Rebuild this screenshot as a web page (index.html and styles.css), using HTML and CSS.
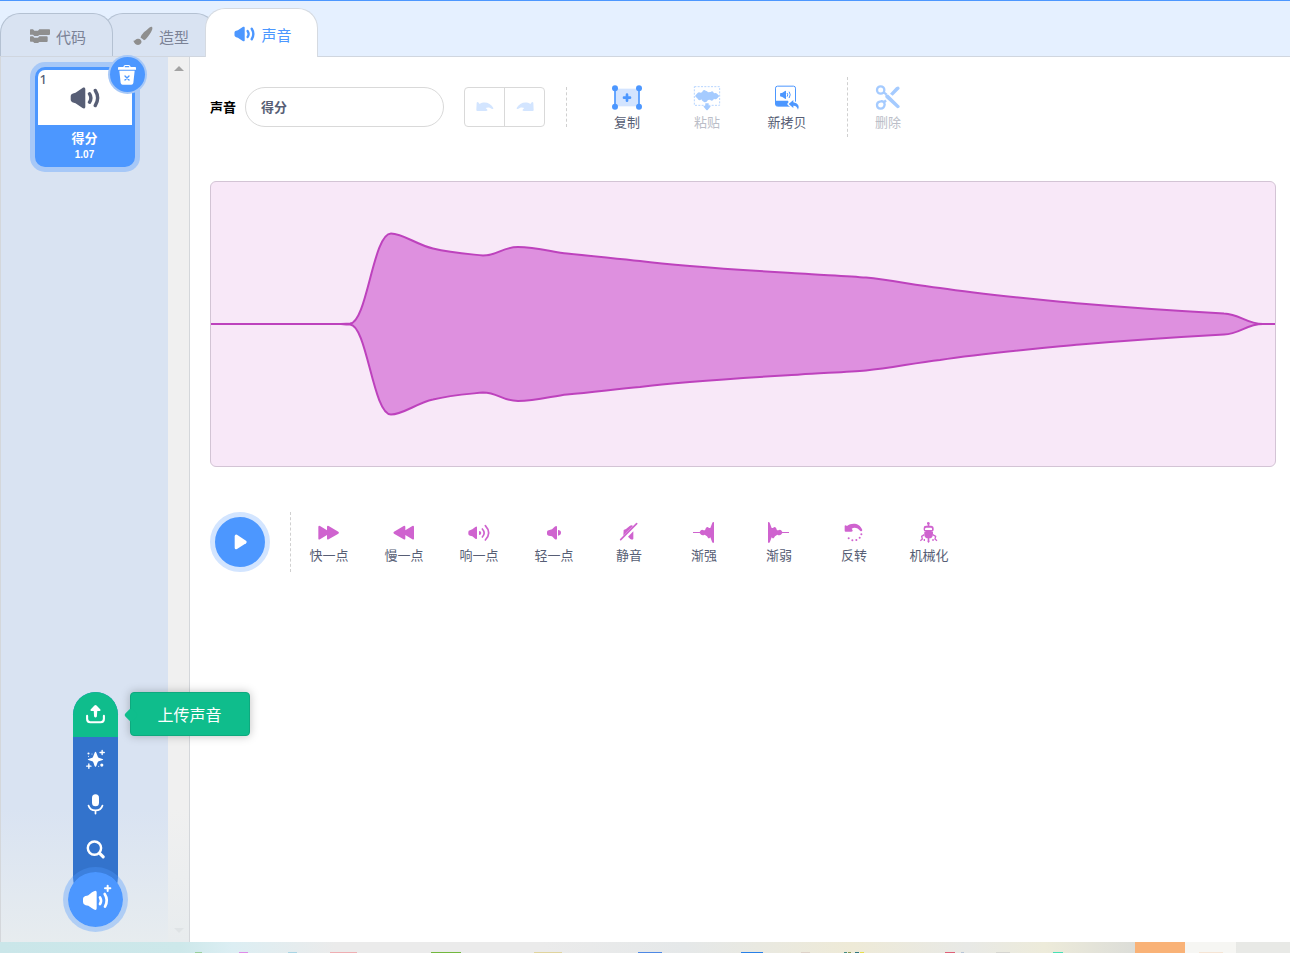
FILE: index.html
```html
<!DOCTYPE html>
<html lang="zh-CN">
<head>
<meta charset="utf-8">
<title>声音</title>
<link rel="stylesheet" href="styles.css">
</head>
<body>
<svg class="defs" aria-hidden="true">
  <symbol id="speaker" viewBox="0 0 30 22">
    <path d="M3 6.500 L5.500 5.800 L12.500 .9 C14 0 15.300 .7 15.300 2 V20 C15.300 21.300 14 22 12.500 21.100 L5.500 16.200 L3 15.500 C1.500 15 .7 14 .7 12.600 V9.400 C.7 8 1.500 7 3 6.500Z" fill="currentColor"/>
    <path d="M19.500 6.800 Q22.300 11 19.500 15.200 M25.300 3.500 Q30 11 25.300 18.500" fill="none" stroke="currentColor" stroke-width="3.400" stroke-linecap="round"/>
  </symbol>
</svg>
<div class="app">
  <header class="tabs" role="tablist">
    <button class="tab tab-first" role="tab">
      <svg width="20" height="14" viewBox="0 0 60 42"><path d="M0 3 Q0 1 2 1 H9 L13 5 H24 L28 1 H58 Q60 1 60 3 V15 Q60 18 57 18 H28 L24 21 H13 L9 17 H0Z M0 24 Q0 22 2 22 H9 L13 26 H24 L28 22 H50 Q53 22 53 25 V36 Q53 39 50 39 H28 L24 42 H13 L9 38 H2 Q0 38 0 36Z" fill="#8f8f8f"/></svg>
      <span>代码</span>
    </button>
    <button class="tab tab-second" role="tab">
      <svg width="20" height="20" viewBox="0 0 60 60"><path d="M57 3 C60 7 57 14 50 25 C44 34 39 41 33 43 C30 40 27 37 23 36 C23 27 33 18 42 11 C49 5 54 1 57 3Z M1 44 C6 46 8 37 16 38 C24 39 28 46 24 52 C18 61 5 57 1 44Z" fill="#8f8f8f"/></svg>
      <span>造型</span>
    </button>
    <button class="tab tab-active" role="tab" aria-selected="true">
      <svg width="21" height="16"><use href="#speaker"/></svg>
      <span>声音</span>
    </button>
  </header>

  <main class="workspace">
    <aside class="sidebar">
      <div class="sound-list">
        <div class="sound-item">
          <div class="sound-thumb">
            <span class="sound-number">1</span>
            <svg width="30" height="22"><use href="#speaker"/></svg>
          </div>
          <span class="sound-name">得分</span>
          <span class="sound-length">1.07</span>
          <button class="sound-delete" aria-label="删除声音">
            <svg width="18" height="20" viewBox="0 0 54 60"><path d="M2 6 H16 Q17 0 22 0 H32 Q37 0 38 6 H52 Q54 6 54 10 V14 H0 V10 Q0 6 2 6Z M4 17 H50 L46 54 Q45 59 40 59 H14 Q9 59 8 54Z" fill="#fff"/><path d="M22 5 H32 M21 33 L33 45 M33 33 L21 45" stroke="#4c97ff" stroke-width="4" stroke-linecap="round"/></svg>
          </button>
        </div>
      </div>
      <div class="scrollbar" aria-hidden="true"><i class="arrow-up"></i><i class="arrow-down"></i></div>

      <div class="add-menu">
        <div class="add-options">
          <button class="add-option add-upload" aria-label="上传声音">
            <svg width="21" height="21" viewBox="0 0 60 60"><path d="M6 34 V43 Q6 52 15 52 H45 Q54 52 54 43 V34" fill="none" stroke="#fff" stroke-width="6" stroke-linecap="round"/><path d="M27 4 Q30 1 33 4 L44 16 Q46 20 42 20 H35 L34 36 Q30 41 26 36 L25 20 H18 Q14 20 16 16Z" fill="#fff"/></svg>
          </button>
          <button class="add-option" aria-label="随机">
            <svg width="21" height="21" viewBox="0 0 60 60" fill="#fff"><path d="M30 8 C33 8 35 21 38 24 C40 27 52 27 52 30 C52 33 41 33 38 36 C35 38 33 51 30 51 C27 51 25 38 22 36 C19 33 8 33 8 30 C8 27 20 27 22 24 C25 21 27 8 30 8Z"/><path d="M49 4 V16 M43 10 H55 M11 43 V55 M5 49 H17" stroke="#fff" stroke-width="4" stroke-linecap="round"/><circle cx="10" cy="13" r="3"/><circle cx="10" cy="21" r="1.500"/><circle cx="20" cy="14" r="1.500"/><circle cx="48" cy="46" r="4.500"/><circle cx="39" cy="49" r="1.500"/></svg>
          </button>
          <button class="add-option" aria-label="录制">
            <svg width="21" height="21" viewBox="0 0 60 60"><rect x="20" y="1" width="20" height="34" rx="10" fill="#fff"/><path d="M10 33 Q14 47 30 47 Q46 47 50 33 M30 47 V56" fill="none" stroke="#fff" stroke-width="5" stroke-linecap="round"/></svg>
          </button>
          <button class="add-option" aria-label="选择一个声音">
            <svg width="21" height="21" viewBox="0 0 60 60" fill="none" stroke="#fff" stroke-linecap="round"><circle cx="27" cy="26" r="19" stroke-width="7"/><path d="M42 41 L52 51" stroke-width="9"/></svg>
          </button>
          <span class="tooltip" role="tooltip">上传声音</span>
        </div>
        <button class="add-main" aria-label="添加声音">
          <svg width="32" height="30" viewBox="0 0 96 90"><path d="M18 38 L22 37 L33 28 Q47 18 47 28 V76 Q47 86 33 76 L22 68 L14 67 Q6 65 6 57 V47 Q7 39 18 38Z" fill="#fff"/><path d="M57 43 Q63 53 57 63 M71 33 Q83 51 72 71" fill="none" stroke="#fff" stroke-width="8" stroke-linecap="round"/><path d="M80 8 V24 M72 16 H88" stroke="#fff" stroke-width="6" stroke-linecap="round"/></svg>
        </button>
      </div>
    </aside>

    <section class="editor">
      <div class="toolbar">
        <label class="name-label" for="sound-name">声音</label>
        <input class="name-input" id="sound-name" type="text" value="得分">
        <div class="history">
          <button class="history-button" aria-label="撤销"><svg width="18" height="12" viewBox="0 0 54 36"><path d="M2 5 Q5 0 9 7 L11 9 C24 0 44 5 52 21 Q53 25 48 24 C43 19 35 18 29 21 L33 25 Q37 30 30 30 H4 Q1 30 1 27Z" fill="#d3e5ff"/></svg></button>
          <button class="history-button" aria-label="重做"><svg width="18" height="12" viewBox="0 0 54 36"><path d="M52 5 Q49 0 45 7 L43 9 C30 0 10 5 2 21 Q1 25 6 24 C11 19 19 18 25 21 L21 25 Q17 30 24 30 H50 Q53 30 53 27Z" fill="#d3e5ff"/></svg></button>
        </div>
        <div class="divider divider-short"></div>
        <div class="tool-group">
          <button class="tool">
            <svg width="32" height="28" viewBox="63 40 96 84"><path d="M75 54 H147 V107 H75Z" fill="#d3e4ff"/><path d="M75 54 V107 M147 54 V107" stroke="#4c97ff" stroke-width="5"/><g fill="#4c97ff"><circle cx="75" cy="53" r="9"/><circle cx="147" cy="53" r="9"/><circle cx="75" cy="108" r="9"/><circle cx="147" cy="108" r="9"/></g><path d="M111 72 V90 M102 81 H120" stroke="#4c97ff" stroke-width="8" stroke-linecap="round"/></svg>
            <span>复制</span>
          </button>
          <button class="tool" disabled>
            <svg width="32" height="28" viewBox="303 40 96 84"><rect x="313" y="48" width="76" height="56" fill="none" stroke="#b7d5ff" stroke-width="3" stroke-dasharray="6 4"/><path d="M315 76 L322 68 Q326 63 331 66 L336 65 Q340 55 347 60 Q352 61 354 65 L362 64 Q368 58 372 68 Q378 65 382 70 L388 76 L382 83 Q377 88 372 84 Q367 94 360 87 L354 88 Q348 98 341 93 Q336 92 334 86 Q328 92 323 84Z M346 98 H356 V105 H360 Q364 106 360 110 L353 118 Q351 120 349 118 L342 110 Q338 106 343 105 H346Z" fill="#a5cbff"/></svg>
            <span>粘贴</span>
          </button>
          <button class="tool">
            <svg width="32" height="28" viewBox="543 40 96 84"><rect x="556.500" y="46.500" width="60" height="60" rx="6" fill="#fff" stroke="#4c97ff" stroke-width="3"/><path d="M556 90 H594 L600 106 H563 Q556 106 556 99Z" fill="#4c97ff"/><path d="M571 67 H576 L585 61 Q588 59 588 62 V83 Q588 86 585 84 L576 78 H573 Q570 78 570 74Z" fill="#4c97ff"/><path d="M592 68 Q595 72 592 77 M598 64 Q604 72 598 81" fill="none" stroke="#4c97ff" stroke-width="3" stroke-linecap="round"/><path d="M610 88 L596 100 L610 112 V105 Q620 104 624 117 Q632 100 610 95Z" fill="#4c97ff" stroke="#fff" stroke-width="8" paint-order="stroke" stroke-linejoin="round"/></svg>
            <span>新拷贝</span>
          </button>
        </div>
        <div class="divider"></div>
        <button class="tool" disabled>
          <svg width="32" height="28" viewBox="846 40 96 84"><g fill="none" stroke="#a5cbff"><circle cx="872" cy="58" r="11" stroke-width="7"/><path d="M872 92 Q883 90 884 102 Q882 114 872 114 Q861 113 861 102 Q862 93 872 92Z" stroke-width="7"/><path d="M881 65 L890 72 M881 96 L888 89" stroke-width="7"/></g><path d="M887 73 Q893 69 898 75 L929 106 Q930 112 922 113 L887 81 Q884 77 887 73Z M900 69 L918 50 Q928 44 929 54 L908 75Z" fill="#a5cbff"/></svg>
          <span>删除</span>
        </button>
      </div>

      <div class="waveform">
        <svg viewBox="0 0 1064 284" preserveAspectRatio="none">
          <path d="M-2 142 H130 Q136 141.500 139 141.500 C156 141 162 51.500 180 51.500 C192 51.500 206 63 222 66.500 C240 71 258 72 272 73.500 C287 73.500 291 65 307 65 C325 65 342 70 356 71.500 C383 74 407 77 429 79 C475 85 530 88 589 91.500 C612 93 638 94 655 95.500 C680 98 703 103 729 106 C775 113 822 117 869 121.500 C910 125 950 128 1013 131.500 C1029 132 1035 142 1052 142 H1066 H1052 C1035 142 1029 152 1013 152.500 C950 156 910 159 869 162.500 C822 167 775 171 729 178 C703 181 680 186 655 188.500 C638 190 612 191 589 192.500 C530 196 475 199 429 205 C407 207 383 210 356 212.500 C342 214 325 219 307 219 C291 219 287 210.500 272 210.500 C258 212 240 213 222 217.500 C206 221 192 232.500 180 232.500 C162 232.500 156 143 139 142.500 Q136 142.500 130 142 H-2Z"/>
        </svg>
      </div>

      <div class="effects">
        <button class="play" aria-label="播放"><svg width="16" height="16" viewBox="0 0 48 48"><path d="M8 6 Q9 0 15 2 L42 20 Q47 24 42 28 L15 45 Q9 48 8 42Z" fill="#fff"/></svg></button>
        <div class="divider"></div>
        <button class="effect"><svg width="32" height="24" viewBox="338 63 96 72"><path d="M354 80 Q355 76 359 78 L380 91 V80 Q381 76 385 78 L414 95 Q418 98 414 101 L385 118 Q381 120 380 116 V105 L359 118 Q355 120 354 116Z"/></svg><span>快一点</span></button>
        <button class="effect"><svg width="32" height="24" viewBox="564 63 96 72"><path d="M642 80 Q641 76 637 78 L616 91 V80 Q615 76 611 78 L582 95 Q578 98 582 101 L611 118 Q615 120 616 116 V105 L637 118 Q641 120 642 116Z"/></svg><span>慢一点</span></button>
        <button class="effect"><svg width="32" height="24" viewBox="789 63 96 72"><path d="M805 96 Q805 92 810 91 L817 88 L826 81 Q831 78 831 82 V115 Q831 119 826 116 L817 109 L810 107 Q805 106 805 102Z M837 93 Q844 93 844 99 Q844 105 837 105Z"/><path d="M847 87 Q858 99 847 111 M856 77 Q876 99 856 120" fill="none" stroke="#cf63cf" stroke-width="5" stroke-linecap="round"/></svg><span>响一点</span></button>
        <button class="effect"><svg width="32" height="24" viewBox="1014 63 96 72"><path d="M1041 96 Q1041 92 1046 91 L1056 88 L1064 80 Q1071 75 1071 82 V115 Q1071 121 1064 117 L1056 109 L1046 107 Q1041 106 1041 102Z M1074 90 Q1083 91 1083 98 Q1083 105 1074 107Z"/></svg><span>轻一点</span></button>
        <button class="effect"><svg width="32" height="24" viewBox="69 63 96 72"><path d="M101 90 L108 87 L119 78 Q125 74 129 78 L100 107Z M130 94 V116 Q128 121 121 117 L114 110Z"/><path d="M92 119 L140 71" stroke="#cf63cf" stroke-width="5" stroke-linecap="round"/></svg><span>静音</span></button>
        <button class="effect"><svg width="32" height="24" viewBox="294 63 96 72"><path d="M309 96 H329 Q334 86 341 91 L345 91 Q349 76 357 84 L361 84 L367 68 Q369 65 372 67 V128 Q368 130 366 125 L361 112 Q356 120 351 109 L344 104 Q335 110 329 99 H309Z"/></svg><span>渐强</span></button>
        <button class="effect"><svg width="32" height="24" viewBox="519 63 96 72"><path d="M597 96 H577 Q572 86 565 91 L561 91 Q557 76 549 84 L545 84 L539 68 Q537 65 534 67 V128 Q538 130 540 125 L545 112 Q550 120 555 109 L562 104 Q571 110 577 99 H597Z"/></svg><span>渐弱</span></button>
        <button class="effect"><svg width="32" height="24" viewBox="744 63 96 72"><path d="M764 77 Q766 74 771 78 C785 67 809 68 817 90 Q816 95 811 93 C804 83 792 80 785 86 L788 91 Q789 95 784 95 H767 Q764 95 764 92Z"/><path d="M814 103 h.1 M809 113 h.1 M799 120 h.1 M787 121 h.1 M776 115 h.1" fill="none" stroke="#cf63cf" stroke-width="6" stroke-linecap="round"/></svg><span>反转</span></button>
        <button class="effect"><svg width="32" height="24" viewBox="969 63 96 72"><circle cx="1015" cy="70" r="4"/><path fill-rule="evenodd" d="M1013 71 H1018 V77 H1024 Q1031 78 1031 84 V90 Q1030 96 1023 96 H1008 Q1001 95 1001 89 V84 Q1001 77 1008 77 H1013Z M1008 83 Q1004 84 1005 90 H1026 Q1027 84 1024 83Z M1003 96 H1029 Q1030 112 1022 115 H1018 V121 Q1021 125 1016 129 Q1010 126 1013 121 V115 H1010 Q1001 112 1003 96Z"/><path d="M1003 104 L995 109 L997 117 L991 122 M1003 117 V123 M1028 104 L1037 109 L1035 117 L1041 122 M1029 117 V123" fill="none" stroke="#cf63cf" stroke-width="4"/></svg><span>机械化</span></button>
      </div>
    </section>
  </main>

  <footer class="desktop-strip" aria-hidden="true">
    <svg viewBox="0 0 1290 11" preserveAspectRatio="none">
      <rect x="1135" width="50" height="11" fill="#f9b277"/><rect x="1185" width="51" height="11" fill="#f6f6f3"/>
      <g>
        <rect x="195" y="10" width="7" height="1" fill="#99cf9c"/><rect x="239" y="10" width="9" height="1" fill="#df8ae8"/><rect x="288" y="10" width="9" height="1" fill="#a9d5e4"/><rect x="330" y="10" width="27" height="1" fill="#efaeb2"/><rect x="431" y="10" width="30" height="1" fill="#72b83e"/><rect x="534" y="10" width="28" height="1" fill="#e0d49e"/><rect x="638" y="10" width="24" height="1" fill="#4d88e5"/><rect x="741" y="10" width="22" height="1" fill="#2780e8"/><rect x="801" y="10" width="9" height="1" fill="#ddd2c8"/><rect x="844" y="10" width="3" height="1" fill="#448b80"/><rect x="848" y="10" width="3" height="1" fill="#8b9e54"/><rect x="855" y="10" width="4" height="1" fill="#31757e"/><rect x="860" y="10" width="4" height="1" fill="#e7df4b"/><rect x="945" y="10" width="10" height="1" fill="#df6078"/><rect x="961" y="10" width="3" height="1" fill="#b7c5d7"/><rect x="996" y="10" width="14" height="1" fill="#d5d5d0"/><rect x="1053" y="10" width="10" height="1" fill="#47e0b5"/><rect x="1199" y="10" width="24" height="1" fill="#f5e4d4"/>
      </g>
    </svg>
  </footer>
</div>
</body>
</html>
```
FILE: styles.css
```css
* { box-sizing: border-box; }

body {
  margin: 0;
  font-family: "Liberation Sans", "Noto Sans CJK SC", sans-serif;
  font-size: 13px;
  color: #575e75;
}

button {
  padding: 0;
  border: 0;
  background: none;
  font: inherit;
  color: inherit;
}

svg { display: block; flex: none; }

.defs { position: absolute; width: 0; height: 0; }

.app {
  display: flex;
  flex-direction: column;
  min-height: 100vh;
  background: #fff;
}

/* tabs */
.tabs {
  display: flex;
  align-items: flex-end;
  height: 57px;
  border-top: 1px solid #4c97ff;
  border-bottom: 1px solid #d0d6df;
  background: #e5f0ff;
}

.tab {
  display: flex;
  align-items: center;
  justify-content: center;
  gap: 6px;
  width: 113px;
  height: 43px;
  padding: 2px 0 0 3px;
  border: 1px solid #b4c1d2;
  border-bottom: 0;
  border-radius: 20px 20px 0 0;
  background: #d9e3f2;
  color: #7b8296;
  font-size: 15px;
}

.tab-first { position: relative; z-index: 1; }
.tab-second { margin-left: -10px; }

.tab-active {
  position: relative;
  z-index: 2;
  height: 49px;
  margin: 0 0 -1px -11px;
  border-color: #d5dae1;
  background: #fff;
  color: #4c97ff;
}

/* sidebar */
.workspace { display: flex; flex: 1; }

.sidebar {
  position: relative;
  display: flex;
  width: 190px;
  border: solid #d4d7db;
  border-width: 0 1px;
  background: linear-gradient(#d9e3f2 85%, #e7ecef);
}

.sound-list {
  display: flex;
  flex: 1;
  flex-direction: column;
  align-items: center;
  padding-top: 10px;
}

.sound-item {
  position: relative;
  display: flex;
  flex-direction: column;
  align-items: center;
  width: 100px;
  height: 100px;
  border: 3px solid #4c97ff;
  border-radius: 10px;
  background: #4c97ff;
  box-shadow: 0 0 0 5px #a7c8f7;
  color: #fff;
  font-weight: bold;
}

.sound-thumb {
  display: flex;
  align-items: center;
  justify-content: center;
  align-self: stretch;
  height: 55px;
  padding-left: 1px;
  border-radius: 7px 7px 0 0;
  background: #fff;
  color: #575e75;
}

.sound-number {
  position: absolute;
  left: 2px;
  top: 0;
  font-family: "Noto Sans", sans-serif;
  font-weight: 500;
}

.sound-name { padding-top: 5px; line-height: 18px; }
.sound-length { font-size: 10px; line-height: 14px; }

.sound-delete {
  position: absolute;
  right: -13px;
  top: -13px;
  display: flex;
  align-items: center;
  justify-content: center;
  width: 35px;
  height: 35px;
  border-radius: 50%;
  background: #4c97ff;
  box-shadow: 0 0 0 2px #a7c8f7;
}

.scrollbar {
  display: flex;
  flex-direction: column;
  align-items: center;
  justify-content: space-between;
  width: 21px;
  padding: 9px 0;
  background: linear-gradient(#f0f0f0 85%, #e8ecee);
}

.arrow-up, .arrow-down {
  border: 5px solid transparent;
  border-top-width: 0;
  border-bottom-color: #a3a3a3;
}

.arrow-down {
  border-width: 5px 5px 0;
  border-color: #dfe3e5 transparent transparent;
}

/* floating add menu */
.add-menu {
  position: absolute;
  left: 0;
  right: 0;
  bottom: 10px;
  display: flex;
  flex-direction: column;
  align-items: center;
}

.add-options {
  position: relative;
  padding-bottom: 28px;
  border-radius: 23px;
  background: #3373cc;
}

.add-option {
  display: flex;
  align-items: center;
  justify-content: center;
  width: 45px;
  height: 45px;
}

.add-upload { border-radius: 23px 23px 0 0; background: #0fbd8c; }

.add-main {
  position: relative;
  display: flex;
  align-items: center;
  justify-content: center;
  width: 65px;
  height: 65px;
  margin-top: -33px;
  padding: 0 0 3px 3px;
  border: 5px solid rgba(76, 151, 255, .35);
  border-radius: 50%;
  background: #4c97ff;
  background-clip: padding-box;
}

.tooltip {
  position: absolute;
  left: 57px;
  top: 0;
  width: 120px;
  padding-top: 4px;
  border: 1px solid #0ea97e;
  border-radius: 4px;
  background: #0fbd8c;
  box-shadow: 0 0 10px rgba(0, 0, 0, .25);
  color: #fff;
  font-size: 16px;
  line-height: 38px;
  text-align: center;
}

.tooltip::before {
  content: "";
  position: absolute;
  left: -5px;
  top: 17px;
  width: 10px;
  height: 10px;
  border-radius: 2px;
  background: #0fbd8c;
  transform: rotate(45deg);
}

/* editor */
.editor {
  flex: 1;
  min-width: 0;
  padding: 20px 14px 20px 20px;
}

.toolbar { display: flex; align-items: center; height: 60px; }

.name-label { padding-bottom: 2px; color: #000; font-weight: bold; }

.name-input {
  width: 199px;
  height: 40px;
  margin: 0 20px 0 9px;
  padding: 0 15px 2px;
  border: 1px solid #d9d9d9;
  border-radius: 20px;
  background: #fff;
  color: #575e75;
  font: inherit;
  font-weight: bold;
}

.history {
  display: flex;
  width: 81px;
  height: 40px;
  border: 1px solid #d9d9d9;
  border-radius: 4px;
}

.history-button {
  display: flex;
  flex: 1;
  align-items: center;
  justify-content: center;
}

.history-button + .history-button { border-left: 1px solid #d9d9d9; }

.divider { height: 60px; border-left: 1px dashed #d0d0d0; }
.divider-short { height: 40px; margin-left: 21px; }

.tool-group { display: flex; margin: 0 20px; }

.tool, .effect {
  display: flex;
  flex-direction: column;
  align-items: center;
  gap: 2px;
  line-height: 18px;
  white-space: nowrap;
}

.tool { width: 80px; padding-top: 2px; }
.tool:disabled { color: #bbbec8; }

.waveform {
  height: 286px;
  margin: 44px 0 45px;
  overflow: hidden;
  border: 1px solid #d3c4d5;
  border-radius: 6px;
  background: #f8e8f8;
}

.waveform svg { width: 100%; height: 100%; }

.waveform path {
  fill: #de90df;
  stroke: #bd42bd;
  stroke-width: 2;
  vector-effect: non-scaling-stroke;
}

.effects { display: flex; align-items: center; }

.play {
  display: flex;
  align-items: center;
  justify-content: center;
  width: 60px;
  height: 60px;
  margin-right: 20px;
  border: 5px solid #d3e5ff;
  border-radius: 50%;
  background: #4c97ff;
}

.effect { width: 75px; padding: 2px 0 0 1px; }
.effect svg { fill: #cf63cf; }

/* strip of desktop below the window */
.desktop-strip {
  height: 11px;
  background: linear-gradient(90deg, #cae6e9 0, #cde8ea 14%, #dceef3 18%, #ebebeb 26%, #ebebeb 42%, #e5e8e9 53%, #eeead7 66%, #e8e9e6 75%, #edebda 81%, #dcddd8 88%, #e8e9e6 96%);
}

.desktop-strip svg { width: 100%; height: 11px; }
```
